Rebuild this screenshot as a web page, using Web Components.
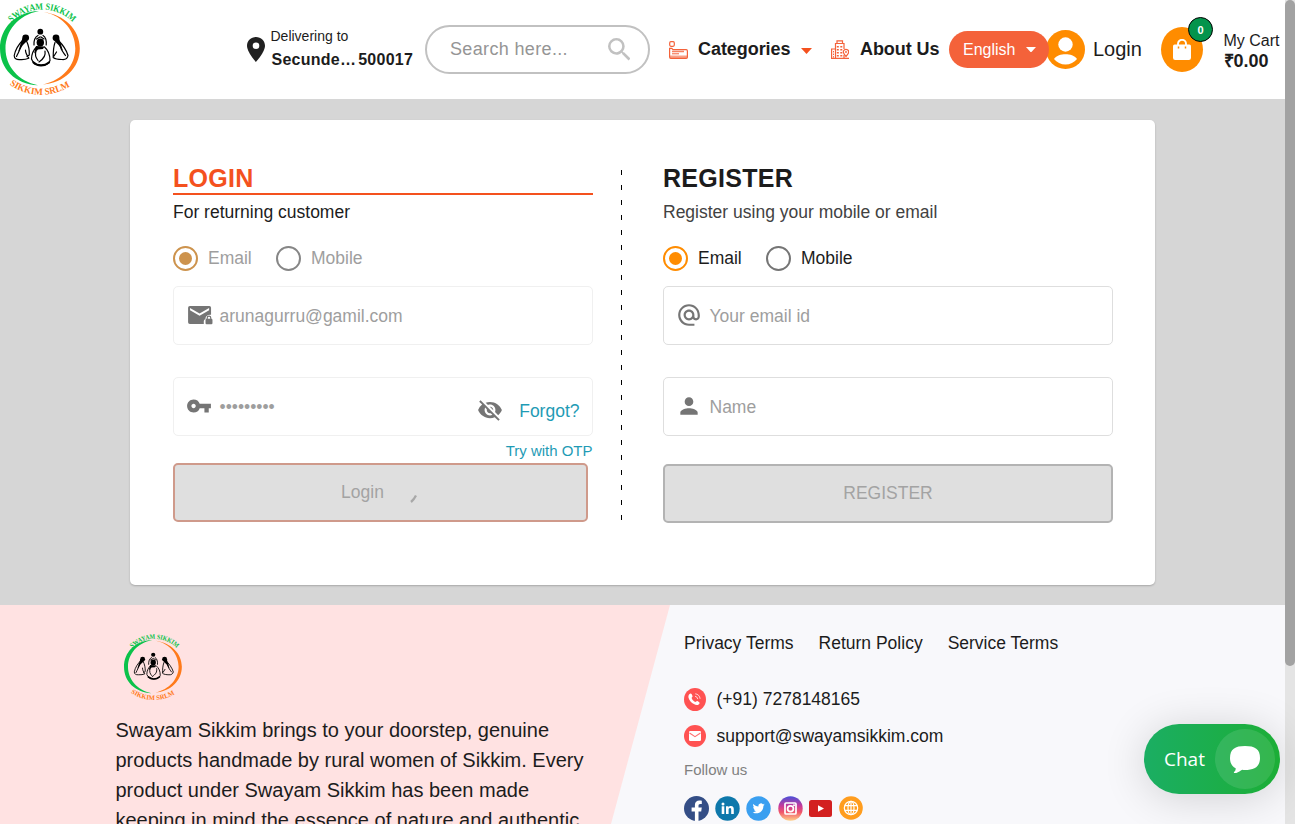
<!DOCTYPE html>
<html lang="en">
<head>
<meta charset="utf-8">
<title>Swayam Sikkim</title>
<style>
html,body{margin:0;padding:0;height:824px;overflow:hidden;background:#d6d6d6}
body{font-family:"Liberation Sans",Arial,sans-serif;color:#1c1c1c}
</style>
</head>
<body>
<sk-page></sk-page>
<script>
const define = (name, html) => {
  const t = document.createElement('template');
  t.innerHTML = html;
  customElements.define(name, class extends HTMLElement {
    constructor() {
      super();
      this.attachShadow({ mode: 'open' }).appendChild(t.content.cloneNode(true));
    }
  });
};

/* ---------- icons ---------- */
const ICONS = {
  pin: ['0 0 18 25', '<path fill-rule="evenodd" d="M9 0C4 0 0 3.8 0 8.8 0 15.200 9 25 9 25s9-9.800 9-16.200C18 3.800 14 0 9 0Zm0 12a3.300 3.300 0 1 1 0-6.600A3.300 3.300 0 0 1 9 12Z"/>'],
  search: ['3 3 17.500 17.500', '<path d="M15.500 14h-.79l-.28-.27A6.470 6.470 0 0 0 16 9.500 6.500 6.500 0 1 0 9.500 16c1.610 0 3.090-.59 4.230-1.570l.27.28v.79l5 4.990L20.490 19l-4.990-5zm-6 0C7.010 14 5 11.990 5 9.500S7.010 5 9.500 5 14 7.010 14 9.500 11.990 14 9.500 14z"/>'],
  caret: ['0 0 11 6', '<path d="M0 0h11L5.500 6Z"/>'],
  categories: ['0 0 19 18', '<g fill="none" stroke="currentColor"><rect x=".7" y=".7" width="4.600" height="4.600" rx="1.200" stroke-width="1.200"/><path stroke-width="1.200" d="M.6 16V7.400h2.200l1.200 1.300h13.200q1.200 0 1.200 1.200v6.300q0 1.200-1.200 1.200H1.800Q.6 17.400.6 16Z"/><path d="M3 10.500h12" stroke-width="1.500" opacity=".8"/><path d="M3 12.800h7" /><path d="M1 15.800h17" opacity=".6" stroke-width="2.600"/></g>'],
  company: ['0 0 18 19', '<g fill="none" stroke="currentColor"><path stroke-width="1.200" d="M4.500 18V3.500h8.500V9M6 3.500V.8h5.500v2.700M.6 18V9h4M0 18.400h18M13 15v3.500"/><path d="M6.800 6v11.500M10.300 6v12" stroke-dasharray="1.600 1.400" stroke-width="2"/><path d="M2.500 11v7" stroke-dasharray="1.400 1.200"/><path stroke-width="1.200" d="M15 16.500c-1.600-1.800-2.700-3-2.700-4.500a2.700 2.700 0 0 1 5.400 0c0 1.500-1.100 2.700-2.700 4.500Z" fill="#fff"/><circle cx="15" cy="12" r=".6"/></g>'],
  avatar: ['0 0 39 39', '<circle cx="19.500" cy="19.500" r="19.500" fill="#ff8c00"/><circle cx="19.500" cy="14.500" r="7.200" fill="#fff"/><path d="M8 29c2.500-3.400 7-4.800 11.500-4.800S28.500 25.600 31 29c-2.700 3.500-7 5.600-11.500 5.600S10.700 32.500 8 29Z" fill="#fff"/>'],
  bag: ['0 0 18 21', '<path d="M1.600 5.500h14.800Q18 5.500 18 7.200v11.600q0 2.200-2.200 2.200H2.200Q0 21 0 18.800V7.200Q0 5.500 1.600 5.500Z"/><path d="M5 9V4.800a4 4 0 0 1 8 0V9" fill="none" stroke="#fff" stroke-width="1.900"/><path d="M5.500 7.500v2M12.500 7.500v2" fill="none" stroke="#ff8c00" stroke-width="1.500"/>'],
  maillock: ['0 0 24 24', '<path fill-rule="evenodd" d="M2.600 3.600h18q1.600 0 1.600 1.600v6.500c-3.200-.3-5.200 1.300-5.200 3.900-1 .5-1.500 1.300-1.500 2.400v2.200H2.600Q1 20.200 1 18.600V5.200q0-1.600 1.600-1.600Zm.2 2v2l8.800 5.200L20.400 7.600v-2l-8.800 5.100Z"/><path fill-rule="evenodd" d="M18.100 15.500v-.8a2.200 2.200 0 0 1 4.400 0v.8q1 .1 1 1.100v3q0 1-1 1h-4.400q-1 0-1-1v-3q0-1 1-1.100Zm1.100 0h2.200v-.8a1.100 1.100 0 0 0-2.200 0Z"/>'],
  key: ['0 0 24 24', '<path d="M12.650 10A5.990 5.990 0 0 0 7 6c-3.310 0-6 2.690-6 6s2.690 6 6 6a5.990 5.990 0 0 0 5.650-4H17v4h4v-4h2v-4H12.650zM7 14c-1.100 0-2-.9-2-2s.9-2 2-2 2 .9 2 2-.9 2-2 2z"/>'],
  eyeoff: ['0 0 24 24', '<path d="M12 7c2.760 0 5 2.240 5 5 0 .65-.13 1.260-.36 1.830l2.920 2.920c1.510-1.260 2.700-2.890 3.430-4.750-1.730-4.390-6-7.500-11-7.500-1.400 0-2.740.25-3.980.7l2.160 2.160C10.740 7.130 11.350 7 12 7zM2 4.270l2.280 2.280.46.46A11.804 11.804 0 0 0 1 12c1.730 4.390 6 7.500 11 7.500 1.550 0 3.030-.3 4.380-.84l.42.42L19.730 22 21 20.730 3.270 3 2 4.270zM7.530 9.800l1.550 1.550c-.05.21-.08.43-.08.65 0 1.660 1.340 3 3 3 .22 0 .44-.03.65-.08l1.550 1.550c-.67.33-1.410.53-2.200.53-2.760 0-5-2.240-5-5 0-.79.2-1.530.53-2.200zm4.310-.78l3.150 3.150.02-.16c0-1.660-1.340-3-3-3l-.17.01z"/>'],
  at: ['0 0 24 24', '<path d="M12 2C6.480 2 2 6.480 2 12s4.480 10 10 10h5v-2h-5c-4.340 0-8-3.660-8-8s3.660-8 8-8 8 3.660 8 8v1.430c0 .79-.71 1.570-1.500 1.570s-1.500-.78-1.500-1.570V12c0-2.760-2.240-5-5-5s-5 2.240-5 5 2.240 5 5 5c1.380 0 2.640-.56 3.540-1.470.65.89 1.770 1.470 2.960 1.470 1.970 0 3.500-1.600 3.500-3.570V12c0-5.520-4.480-10-10-10zm0 13c-1.660 0-3-1.340-3-3s1.340-3 3-3 3 1.340 3 3-1.340 3-3 3z"/>'],
  person: ['0 0 24 24', '<path d="M12 12c2.210 0 4-1.790 4-4s-1.790-4-4-4-4 1.790-4 4 1.790 4 4 4zm0 2c-2.670 0-8 1.340-8 4v2h16v-2c0-2.660-5.330-4-8-4z"/>'],
  phone: ['0 0 22 23', '<ellipse cx="11" cy="11.500" rx="11" ry="11.500" fill="#ff5252"/><path d="M5.300 6.200c1-1.100 1.900-.9 2.400.1l.8 1.700c.3.800-.7 1.300-.9 2 .5 1.700 1.900 3.200 3.700 4 .8-.1 1.200-1.300 2.100-.9l1.500.8c.9.600.9 1.500 0 2.300-1.400 1.400-3.300.8-5-.1-2.600-1.400-4.600-3.500-5.300-6.100-.4-1.600-.2-2.800.7-3.800Z" fill="#fff"/><path d="M11 8.300c1.500.2 2.500 1.200 2.700 2.800M11.200 5.800c2.700.2 4.700 2.200 4.900 5" fill="none" stroke="#fff" opacity=".75"/>'],
  mail: ['0 0 22 22', '<circle cx="11" cy="11" r="11" fill="#ff5252"/><rect x="5" y="6" width="12" height="10" rx="1.200" fill="#fff"/><path d="m5.500 8 5.500 3.700L16.500 8" fill="none" stroke="#ff7070" stroke-width="1.100"/>'],
  facebook: ['0 0 25 25', '<circle cx="12.500" cy="12.500" r="12.500" fill="#344e86"/><path d="M10.900 25v-9.600H7.600v-3.800h3.300V9.100c0-3 1.800-4.500 4.500-4.500.9 0 1.800.1 2.400.2v3.300h-1.500c-1.400 0-1.800.7-1.800 1.800v1.700h3.300l-.6 3.800h-2.700V25Z" fill="#fff"/>'],
  linkedin: ['0 0 25 25', '<circle cx="12.500" cy="12.500" r="12.200" fill="#0e78ab"/><g fill="#fff"><circle cx="8" cy="7.900" r="1.500"/><path d="M6.700 10.300h2.600v7.600H6.700ZM11 10.300h2.500v1.100c.5-.8 1.400-1.300 2.400-1.300 2.300 0 2.900 1.500 2.900 3.500v4.300h-2.600V14c0-1-.1-1.900-1.200-1.900-1.100 0-1.400.8-1.400 1.900v3.900H11Z"/></g>'],
  twitter: ['0 0 25 25', '<circle cx="12.500" cy="12.500" r="12.200" fill="#3a9ff0"/><path d="M18.700 8.600c-.5.200-.9.300-1.400.4.500-.3.900-.8 1.100-1.400-.5.300-1 .5-1.600.6a2.500 2.500 0 0 0-4.300 2.300c-2.100-.1-3.900-1.100-5.100-2.600-.7 1.100-.3 2.600.8 3.300-.4 0-.8-.1-1.100-.3 0 1.200.8 2.200 2 2.500-.4.100-.8.100-1.100 0 .3 1 1.200 1.700 2.300 1.700A5 5 0 0 1 6.600 16.200c4.600 2.900 10.800.3 10.800-6.400.5-.3.900-.7 1.300-1.200Z" fill="#fff"/>'],
  instagram: ['0 0 25 25', '<defs><linearGradient id="ig" x2="0" y2="1"><stop offset="0" stop-color="#4a4fd8"/><stop offset=".4" stop-color="#c93a9a"/><stop offset=".65" stop-color="#f0566a"/><stop offset="1" stop-color="#ffd08a"/></linearGradient></defs><circle cx="12.500" cy="12.500" r="12.200" fill="url(#ig)"/><g fill="none" stroke="#fff" stroke-width="1.700"><rect x="7" y="7" width="11" height="11" rx="1"/><circle cx="12.500" cy="12.700" r="2.900"/></g><circle cx="16" cy="9.200" r="1" fill="#fff"/>'],
  youtube: ['0 0 23 17', '<rect width="23" height="17" rx="2.500" fill="#d32020"/><path d="m9 5.300 6 3.200-6 3.200Z" fill="#fff"/>'],
  globe: ['0 0 24 24', '<circle cx="12" cy="12" r="11.800" fill="#ff9d1e"/><g fill="none" stroke="#fff" stroke-width="1.200"><circle cx="12" cy="12" r="6.700"/><ellipse cx="12" cy="12" rx="3" ry="6.700"/><path d="M12 5.300v13.400M5.800 9.700h12.400M5.800 14.300h12.400"/></g>'],
  bubble: ['0 0 30 27', '<path d="M15 0C25 0 30 3 30 12s-6 12-15 12c-1 0-2 0-2.800-.2C10 25 7 27.500 4.500 27.200c-1-.2-.7-1 0-1.700.8-.8 1.200-1.800 1.200-3.300C2 20.500 0 17 0 12 0 3 5 0 15 0Z"/>']
};
customElements.define('sk-icon', class extends HTMLElement {
  connectedCallback() {
    if (this.shadowRoot) return;
    const [box, body] = ICONS[this.getAttribute('name')];
    const w = this.getAttribute('w'), h = this.getAttribute('h') || w;
    this.attachShadow({ mode: 'open' }).innerHTML =
      `<style>:host{display:block;flex:none;width:${w}px;height:${h}px}svg{display:block;width:100%;height:100%}</style>
       <svg viewBox="${box}" preserveAspectRatio="none" fill="currentColor">${body}</svg>`;
  }
});

/* ---------- brand mark ---------- */
define('sk-logo', `
<style>
:host{display:block;flex:none}
svg{display:block;width:100%;height:100%;overflow:visible}
text{font:bold 9.500px "Liberation Serif",serif}
</style>
<svg viewBox="0 0 80 96" preserveAspectRatio="none">
  <defs>
    <path id="top" d="M11.500 22.500A43 43 0 0 1 72.500 22"/>
    <path id="bot" d="M9.500 84.500A54 54 0 0 0 70.500 86"/>
  </defs>
  <path fill="#0bc24a" d="M39 11C15 12 0 28 0 48.500S15 84 38 85.300C18 81 5.500 66 5.500 48.500S18 15 39 11Z"/>
  <path fill="#ff7a1a" d="M44 12c20 3 35.800 17 35.800 36.500S64 83 43 84.500C63 80 75.300 65 75.300 48.500S64 16 44 12Z"/>
  <text fill="#0bc24a"><textPath href="#top" textLength="68" lengthAdjust="spacingAndGlyphs">SWAYAM SIKKIM</textPath></text>
  <text fill="#ff7a1a"><textPath href="#bot" textLength="64" lengthAdjust="spacingAndGlyphs">SIKKIM SRLM</textPath></text>
  <g fill="none" stroke="#000" stroke-width="1.200" stroke-linecap="round" stroke-linejoin="round">
    <path d="M23 40c-4 4-7.500 9-8.800 15.500 0 3 2 4.300 6 4 3.500.2 6-.2 8.600-1.300-2-3-3.300-5-3.300-8M26.500 41c2 4 3 9 2.800 14l-2.300 1.500M21.500 44c-.5 5-3 8-5 12.500"/>
    <path d="M58 40c4 4 8.500 10 10 15.500-.5 3-3 4.300-6 4-3.500 0-7-.5-8.800-2 0-5 0-10 1.800-15M60 44c0 5 3 8 5.500 11.500M54 56l2.500-4"/>
    <path d="M38 35.500c-3 1.500-4.200 5-4 9.500M43 35.500c2.500 1.500 3.600 5 3.200 9.500M36.500 39l3.500-2M44 39l-3-2"/>
    <path d="M36.500 47c-3.500 3.500-5 7-5 12 1.500 4 5 6.500 9.500 6.500s8-2 9-5c0-6-1.500-10-5.500-13.500M36 51c-1.500 4 0 7 2 9.500M45 51c1 5-1.500 8-6 11"/>
    <path stroke-width="2.200" d="M33.500 62.500c4 3.800 11 3.800 15.500 0"/>
  </g>
  <circle cx="40.300" cy="31.700" r="2.900"/><ellipse cx="40.300" cy="42.500" rx="3.700" ry="4.100"/>
  <path d="M36 46l8.500.5-1.500 2.500-5 .5-4 4Z"/>
  <circle cx="25.700" cy="37.800" r="3.400"/><circle cx="56" cy="37.800" r="3.400"/>
  <path d="m22.500 38 4.500 3-4 4-5 7ZM59 38l-4.500 3 4 4 4.500 6Z"/>
</svg>`);

/* ---------- header ---------- */
define('sk-header', `
<style>
:host{display:flex;align-items:center;height:99px;background:#fff;white-space:nowrap}
sk-logo{width:80px;height:96px;margin:-3px 166.500px 0 0}
.row{display:flex;align-items:center;box-sizing:border-box;flex:none}
.deliver{width:178.500px;gap:6px}
.deliver sk-icon{color:#212121}
.deliver div{font-size:14px;line-height:23px;padding-bottom:3px}
.deliver b{display:flex;gap:2px;font-size:16px;letter-spacing:.25px;padding-left:1px}
.search{width:225px;height:49px;border:2px solid #c1c1c1;border-radius:25px;padding:0 18px 0 23px;justify-content:space-between;color:#959595;font-size:18px;letter-spacing:.35px}
.search sk-icon{color:#c1c1c1}
.nav{font-weight:bold;font-size:18px;letter-spacing:-.06px;height:24px}
.nav span{margin-top:-1px}
.nav sk-icon{color:#f4623a}
.nav .dn{color:#f4511e}
.cat{margin-left:19px;width:162px}
.about{width:118px}
.lang{width:100px;height:37px;border-radius:19px;background:#f4623a;color:#fff;font-size:16px;padding-left:14px;gap:11px;position:relative;z-index:1}
.acct{width:115px;margin-left:-3px;gap:8px;font-size:20px}
.cart{gap:20.500px}
.disc{position:relative;width:42px;height:45px;border-radius:50%;background:#ff8c00;color:#fff;display:grid;place-items:center}
.badge{position:absolute;left:27px;top:-10px;box-sizing:border-box;width:25px;height:25px;border:1px solid #000;border-radius:50%;background:#04944c;font:bold 11px/24px "Liberation Sans",sans-serif;text-align:center}
.sum{font-size:16px;line-height:21px;padding-top:2px}
.sum b{display:block;font-size:18px}
</style>
<sk-logo></sk-logo>
<div class="row deliver"><sk-icon name="pin" w="18" h="25"></sk-icon><div>Delivering to<b><span>Secunde…</span><span>500017</span></b></div></div>
<div class="row search"><span>Search here...</span><sk-icon name="search" w="22.500"></sk-icon></div>
<div class="row nav cat"><sk-icon name="categories" w="19" h="18"></sk-icon><span style="margin-left:10px;margin-right:11px">Categories</span><sk-icon class="dn" name="caret" w="11" h="6" style="margin-top:3px"></sk-icon></div>
<div class="row nav about"><sk-icon name="company" w="18" h="19"></sk-icon><span style="margin-left:11px">About Us</span></div>
<div class="row lang"><span>English</span><sk-icon name="caret" w="10" h="5.500"></sk-icon></div>
<div class="row acct"><sk-icon name="avatar" w="39"></sk-icon><span>Login</span></div>
<div class="row cart"><div class="disc"><sk-icon name="bag" w="18" h="21"></sk-icon><span class="badge">0</span></div><div class="sum">My Cart<b>₹0.00</b></div></div>`);

/* ---------- form controls ---------- */
define('sk-radio', `
<style>
:host{display:flex;align-items:center;gap:10px;width:103px;height:25px;font-size:17.500px;--tone:#757575}
:host([checked]){--tone:#ff8c00}
:host([disabled]){color:#9e9e9e;--tone:#868686}
:host([disabled][checked]){--tone:#cd934d}
i{box-sizing:border-box;width:25px;height:25px;border:2px solid var(--tone);border-radius:50%;display:grid;place-items:center}
:host([checked]) i::before{content:"";width:13px;height:13px;border-radius:50%;background:var(--tone)}
</style><i></i><span><slot></slot></span>`);

define('sk-field', `
<style>
:host{display:flex;align-items:center;box-sizing:border-box;height:59px;border:1px solid #dedede;border-radius:5px;padding:1px 12.500px 0 12px;font-size:17.500px;color:#9e9e9e}
:host([disabled]){border-color:#f0f0f0}
.icon{color:#757575;margin:-2px 7.500px 0 0}
.end{display:flex;align-items:center;gap:16px;margin-left:auto;padding-top:8px}
</style><span class="icon"><slot name="icon"></slot></span><slot></slot><span class="end"><slot name="end"></slot></span>`);

define('sk-button', `
<style>
:host{display:flex;align-items:center;justify-content:center;box-sizing:border-box;height:59px;border:2px solid var(--edge,#b3b3b3);border-radius:5px;background:#dfdfdf;color:#a3a3a3;font-size:17.500px}
</style><slot></slot>`);

define('sk-panel', `
<style>
:host{display:block}
h2{margin:0;font-size:25px;line-height:30px;letter-spacing:.3px;border-bottom:2px solid transparent}
:host([active]) h2{color:#f4511e;border-color:#f4511e}
p{margin:5px 0 22px;font-size:17.500px;line-height:24px;color:var(--sub,#424242)}
.radios{display:flex;margin-bottom:15px}
</style>
<h2><slot name="title"></slot></h2><p><slot name="sub"></slot></p>
<div class="radios"><slot name="radios"></slot></div><slot></slot>`);

define('sk-card', `
<style>
:host{display:flex;box-sizing:border-box;width:1025px;height:465px;margin:21px 0 20px 130px;padding:43px 42px 0 43px;background:#fff;border-radius:5px;box-shadow:0 1px 2px rgba(0,0,0,.22)}
.login{width:420px;--sub:#1c1c1c}
.reg{width:450px}
.rule{width:1px;height:350px;margin:7px 41px 0 28px;background:repeating-linear-gradient(#000 0 5px,transparent 5px 15px)}
.gap{margin-bottom:32px}
.link{color:#1f9bb5}
.otp{text-align:right;font-size:15px;line-height:20px;padding:5px .5px 2px 0;letter-spacing:-.02px}
.spin{margin:12px 0 0 26px}
</style>
<sk-panel class="login" active>
  <span slot="title">LOGIN</span><span slot="sub">For returning customer</span>
  <sk-radio slot="radios" checked disabled>Email</sk-radio><sk-radio slot="radios" disabled>Mobile</sk-radio>
  <sk-field class="gap" disabled><sk-icon slot="icon" name="maillock" w="26" style="margin:0 -1px 0 1px"></sk-icon>arunagurru@gamil.com</sk-field>
  <sk-field disabled><sk-icon slot="icon" name="key" w="26"></sk-icon>•••••••••<sk-icon slot="end" name="eyeoff" w="26" style="color:#757575;margin:-2px .5px 0 0"></sk-icon><span slot="end" class="link">Forgot?</span></sk-field>
  <div class="otp link">Try with OTP</div>
  <sk-button style="width:415px;--edge:#cf9a8b;padding-right:3px"><span>Login</span><svg class="spin" width="7" height="9" viewBox="0 0 7 9"><path d="M1 8Q4 5.500 6 1.500" fill="none" stroke="#a8a8a8" stroke-width="2.300"/></svg></sk-button>
</sk-panel>
<div class="rule"></div>
<sk-panel class="reg">
  <span slot="title">REGISTER</span><span slot="sub">Register using your mobile or email</span>
  <sk-radio slot="radios" checked>Email</sk-radio><sk-radio slot="radios">Mobile</sk-radio>
  <sk-field class="gap"><sk-icon slot="icon" name="at" w="26"></sk-icon>Your email id</sk-field>
  <sk-field><sk-icon slot="icon" name="person" w="26"></sk-icon>Name</sk-field>
  <sk-button style="margin-top:28px">REGISTER</sk-button>
</sk-panel>`);

/* ---------- footer ---------- */
define('sk-footer', `
<style>
:host{display:flex;height:219px;background:#f8f8fb;overflow:hidden}
.about{box-sizing:border-box;width:670px;height:219px;padding:27px 0 0 115.500px;background:#ffe2e2;clip-path:polygon(0 0,670px 0,611px 100%,0 100%);flex:none}
sk-logo{width:58px;height:69px;margin-left:8px}
.about p{margin:14px 0 0;font-size:20px;line-height:30px;white-space:nowrap}
.info{padding:26px 0 0 14px;font-size:17.500px}
.row{display:flex;align-items:center;height:24px}
.links{gap:25px}
.contact{gap:10.500px}
.follow{font-size:15px;color:#808080;line-height:20px}
.social{gap:6.200px;height:26px}
</style>
<div class="about"><sk-logo></sk-logo><p>Swayam Sikkim brings to your doorstep, genuine<br>products handmade by rural women of Sikkim. Every<br>product under Swayam Sikkim has been made<br>keeping in mind the essence of nature and authentic</p></div>
<div class="info">
  <div class="row links"><span>Privacy Terms</span><span>Return Policy</span><span>Service Terms</span></div>
  <div class="row contact" style="margin-top:32px"><sk-icon name="phone" w="22" h="23"></sk-icon><span>(+91) 7278148165</span></div>
  <div class="row contact" style="margin-top:13px"><sk-icon name="mail" w="22"></sk-icon><span>support@swayamsikkim.com</span></div>
  <div class="follow" style="margin-top:12px">Follow us</div>
  <div class="row social" style="margin-top:15px"><sk-icon name="facebook" w="25"></sk-icon><sk-icon name="linkedin" w="25"></sk-icon><sk-icon name="twitter" w="25"></sk-icon><sk-icon name="instagram" w="25"></sk-icon><sk-icon name="youtube" w="23" h="17" style="margin:0 1px 0 .5px"></sk-icon><sk-icon name="globe" w="24"></sk-icon></div>
</div>`);

define('sk-chat', `
<style>
:host{position:absolute;right:15px;bottom:30px;display:flex;align-items:center;justify-content:space-between;box-sizing:border-box;width:136px;height:70px;padding:0 5px 0 20px;border-radius:35px;background:linear-gradient(90deg,#1bae63,#1cae36);box-shadow:0 4px 44px rgba(0,0,0,.16);color:#fff;font:19px "Open Sans",sans-serif}
.orb{width:60px;height:60px;border-radius:50%;background:rgba(255,255,255,.11);display:grid;place-items:center}
</style><span>Chat</span><div class="orb"><sk-icon name="bubble" w="30" h="27"></sk-icon></div>`);

define('sk-page', `
<style>
:host{display:grid;grid-template-columns:1285px 10px;height:824px;position:relative;overflow:hidden}
main{background:#d6d6d6;overflow:hidden;display:flow-root}
.track{background:#e4e4e4}
.thumb{height:666px;border-radius:5px;background:#a2a2a2}
</style>
<main><sk-header></sk-header><sk-card></sk-card><sk-footer></sk-footer></main>
<div class="track"><div class="thumb"></div></div>
<sk-chat></sk-chat>`);
</script>
</body>
</html>
